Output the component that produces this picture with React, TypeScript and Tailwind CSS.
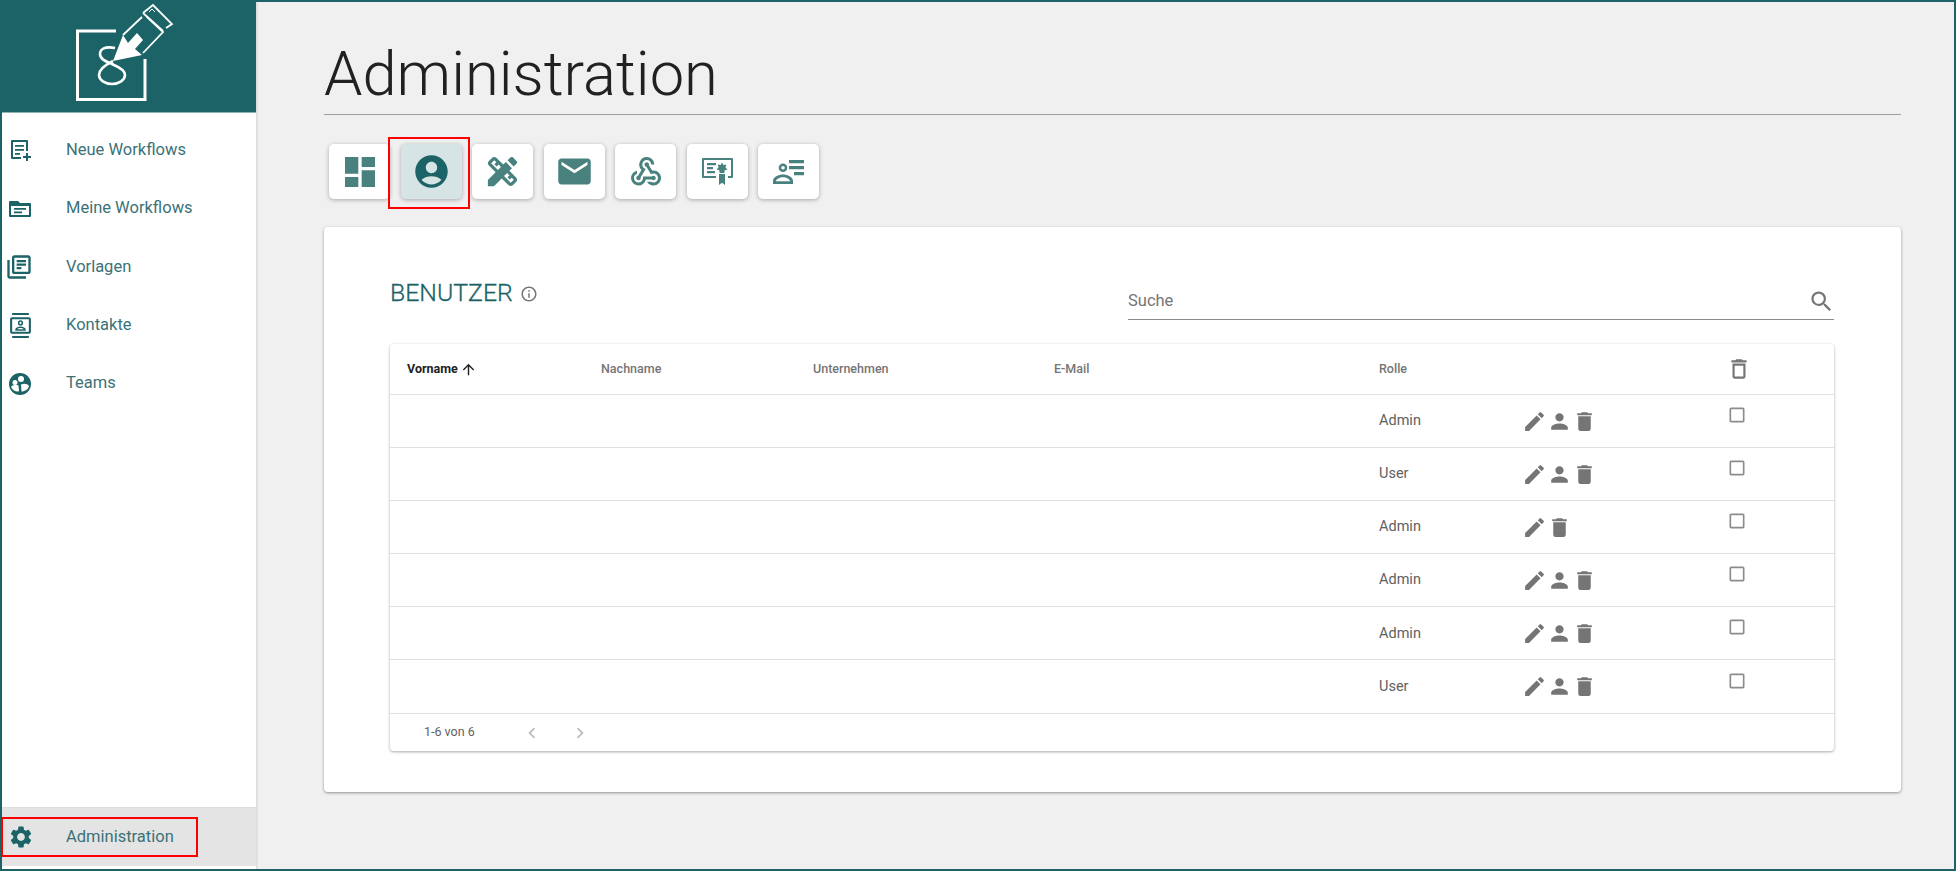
import {
  MdAccountCircle,
  MdArrowUpward,
  MdChevronLeft,
  MdChevronRight,
  MdDashboard,
  MdDelete,
  MdDesignServices,
  MdEdit,
  MdEmail,
  MdOutlineCheckBoxOutlineBlank,
  MdOutlineContacts,
  MdOutlineDelete,
  MdOutlineInfo,
  MdOutlineLibraryBooks,
  MdPerson,
  MdSearch,
  MdSettings,
  MdWebhook,
} from "react-icons/md";

const Logo = () => (
  <svg width="100" height="108" viewBox="76 2 100 108" fill="none" stroke="#fff">
    <path d="M116 31H77.500V99.500H145V59" strokeWidth="3" />
    <path d="M115 48C105 46 100 49 100 54C100 60 108 62 114 65C121 68 125 71 125 75C125 80 119 84 112 84C105 84 99 80 99 75C99 69 105 65 113 61" strokeWidth="2.600" />
    <path d="M113 61L123 35L128 43L137 33L143 40L135 49L142 55Z" fill="#fff" stroke="none" />
    <path d="M123 35L142 17M147 17L163 32L143 53" strokeWidth="1.800" />
    <path d="M143 13L153 5L172 24L166 28M143 13L163 31" strokeWidth="1.800" />
    <path d="M149 12L152 9L155 12" strokeWidth="1" />
  </svg>
);

const PostAddIcon = () => (
  <svg width="24" height="24" viewBox="0 0 24 24" fill="currentColor">
    <path d="M4 2h15a1 1 0 0 1 1 1v10h-2V4H5v15h8v2H4a1 1 0 0 1-1-1V3a1 1 0 0 1 1-1Z" />
    <path d="M7 7h9v1.800H7zM7 11h9v1.800H7zM7 15h5v1.800H7z" />
    <path d="M18 15h2v3h3v2h-3v3h-2v-3h-3v-2h3z" />
  </svg>
);

const FolderLines = () => (
  <svg width="24" height="24" viewBox="0 0 24 24" fill="currentColor">
    <path d="M2 4h8l2 2h10a1 1 0 0 1 1 1v12a1 1 0 0 1-1 1H2a1 1 0 0 1-1-1V5a1 1 0 0 1 1-1Zm1 5v9h18V9H3Z" />
    <path d="M6 11h12v1.700H6zM6 14.500h8v1.700H6z" />
  </svg>
);

const TeamsIcon = () => (
  <svg width="24" height="24" viewBox="0 0 24 24">
    <circle cx="12" cy="12" r="11" fill="currentColor" />
    <circle cx="13" cy="7" r="3" fill="#fff" />
    <circle cx="7" cy="10.500" r="2.500" fill="#fff" />
    <path d="M3 15c1-2 5-2.500 7.500-1.500L11 19c-1.500 1.500-6 0-8-4Z" fill="#fff" />
    <path d="M13 12.500c2.500-1.500 6.500-1 8 1.500-.5 3-4 5.500-7.500 5.500Z" fill="#fff" />
  </svg>
);

const CertificateIcon = () => (
  <svg width="31" height="27" viewBox="0 0 31 27" fill="currentColor">
    <path d="M1 0h29a1 1 0 0 1 1 1v18a1 1 0 0 1-1 1h-4v-2h3V2H2v16h12v2H1a1 1 0 0 1-1-1V1a1 1 0 0 1 1-1Z" />
    <path d="M5 5h9v2.200H5zM5 9h6v2.200H5zM5 13h8v2.200H5z" />
    <path d="M20 4.500l1.400 2.600 2.900-.5-.8 2.800 2 2.100-2.800.8-.3 2.700h-4.800l-.3-2.700-2.800-.8 2-2.100-.8-2.800 2.900.5Z" />
    <path d="M17 16h6v11l-3-2.200-3 2.200z" />
  </svg>
);

const PersonLines = () => (
  <svg width="31" height="24" viewBox="0 0 31 24" fill="currentColor">
    <path d="M10 3.500a4.300 4.300 0 1 1 0 8.600 4.300 4.300 0 0 1 0-8.600Zm0 2.500a1.800 1.800 0 1 0 0 3.600A1.800 1.800 0 0 0 10 6Z" />
    <path d="M0 24v-3c0-4 5.500-6.500 10-6.500S20 17 20 21v3Zm2.800-2.800h14.400c-.5-2-3.700-4-7.200-4s-6.700 2-7.200 4Z" />
    <path d="M16 0h15v3.200H16zM16 6h15v3.200H16zM21 12h10v3.200H21z" />
  </svg>
);

const navItems = [
  { label: "Neue Workflows", icon: <PostAddIcon /> },
  { label: "Meine Workflows", icon: <FolderLines /> },
  { label: "Vorlagen", icon: <MdOutlineLibraryBooks size={28} className="ml-[-3px]" /> },
  { label: "Kontakte", icon: <MdOutlineContacts size={25} /> },
  { label: "Teams", icon: <TeamsIcon /> },
];

const toolbar = [
  { id: 1, icon: <MdDashboard size={40} /> },
  { id: 2, icon: <MdAccountCircle size={39} />, active: true },
  { id: 3, icon: <MdDesignServices size={39} /> },
  { id: 4, icon: <MdEmail size={39} /> },
  { id: 5, icon: <MdWebhook size={36} /> },
  { id: 6, icon: <CertificateIcon /> },
  { id: 7, icon: <PersonLines /> },
];

const users = [
  { id: 1, role: "Admin", canImpersonate: true },
  { id: 2, role: "User", canImpersonate: true },
  { id: 3, role: "Admin", canImpersonate: false },
  { id: 4, role: "Admin", canImpersonate: true },
  { id: 5, role: "Admin", canImpersonate: true },
  { id: 6, role: "User", canImpersonate: true },
];

const gridCols = "grid grid-cols-[194px_212px_241px_325px_143px_207px_1fr] items-center pl-[17px] pr-4";

const App = () => {
  return (
    <div className="flex h-[871px] w-full border-2 border-[#1c6367] bg-[#f0f0f0] font-['Roboto',sans-serif]">
      <aside className="flex w-[256px] flex-col border-r-2 border-[#e0e0e0] bg-white">
        <div className="h-[111px] border-b border-[#8fb5b5] bg-[#1c6367] pl-[74px]">
          <Logo />
        </div>
        <nav className="flex flex-1 flex-col pt-[8px] text-[#3b7277]">
          {navItems.map((item) => (
            <div key={item.label} className="flex h-[58.400px] items-center">
              <div className="flex w-[64px] shrink-0 justify-start pl-[6px] text-[#1c6367]">{item.icon}</div>
              <span className="text-[16.500px]">{item.label}</span>
            </div>
          ))}
        </nav>
        <div className="relative mb-[3px] flex h-[59px] items-center border-t border-[#dddddd] bg-[#e4e4e4] text-[#3b7277]">
          <div className="flex w-[64px] shrink-0 pl-[6px] text-[#1c6367]">
            <MdSettings size={26} />
          </div>
          <span className="text-[16.500px]">Administration</span>
          <div className="absolute left-[-1px] top-[9px] h-[40px] w-[197px] border-2 border-[#ff0000]" />
        </div>
      </aside>

      <main className="min-w-0 flex-1 pl-[66px] pr-[53px]">
        <h1 className="mt-[35px] border-b border-[#9e9e9e] pb-[2px] text-[61.500px] font-light leading-[75px] text-[#212121]">
          Administration
        </h1>

        <div className="mt-[29px] flex gap-[10.500px] pl-[5px]">
          {toolbar.map((btn) => (
            <div
              key={btn.id}
              className={`relative flex h-[55px] w-[61px] items-center justify-center rounded-[5px] shadow-[0_1px_4px_rgba(0,0,0,0.3)] ${
                btn.active ? "bg-[#d6e4e5] text-[#1c6367]" : "bg-white text-[#49817f]"
              }`}
            >
              {btn.icon}
              {btn.active && (
                <div className="absolute left-[-13px] top-[-7px] h-[72px] w-[82px] border-2 border-[#ff0000]" />
              )}
            </div>
          ))}
        </div>

        <section className="mt-[28px] h-[565px] rounded-[4px] bg-white pl-[66px] pr-[67px] pt-[47px] shadow-[0_1px_3px_rgba(0,0,0,0.4)]">
          <div className="flex h-[70px] items-start justify-between">
            <div className="mt-[3px] flex items-center gap-[7px] text-[#1c6367]">
              <h2 className="text-[24.800px] font-light leading-[32px] [-webkit-text-stroke:0.3px_#1c6367]">BENUTZER</h2>
              <MdOutlineInfo size={18} className="mt-[2px] text-[#757575]" />
            </div>
            <div className="mt-[12px] flex h-[34px] w-[706px] items-center justify-between border-b border-[#8c8c8c] pb-[3px] text-[#757575]">
              <span className="mt-[1px] text-[16.500px] font-normal">Suche</span>
              <MdSearch size={27} className="mr-[-1px]" />
            </div>
          </div>

          <div className="rounded-[4px] bg-white shadow-[0_1px_3px_rgba(0,0,0,0.35)]">
            <div className={`${gridCols} h-[51px] border-b border-[#e0e0e0] text-[12.500px] font-medium text-[#757575]`}>
              <span className="flex items-center gap-[2px] font-bold text-[#212121]">
                Vorname <MdArrowUpward size={17} />
              </span>
              <span>Nachname</span>
              <span>Unternehmen</span>
              <span>E-Mail</span>
              <span>Rolle</span>
              <span />
              <MdOutlineDelete size={26} className="ml-[-3px]" />
            </div>
            {users.map((user) => (
              <div key={user.id} className={`${gridCols} h-[53.100px] border-b border-[#e0e0e0] text-[14.500px] text-[#616161]`}>
                <span />
                <span />
                <span />
                <span />
                <span>{user.role}</span>
                <div className="flex items-center text-[#757575]">
                  <MdEdit size={25} />
                  {user.canImpersonate && <MdPerson size={25} />}
                  <MdDelete size={25} />
                </div>
                <MdOutlineCheckBoxOutlineBlank size={20} className="mb-[12px] ml-[-2px] text-[#8c8c8c]" />
              </div>
            ))}
            <div className="flex h-[37.500px] items-center pl-[34px] text-[12.500px] text-[#616161]">
              <span className="w-[97px]">1-6 von 6</span>
              <MdChevronLeft size={22} className="mt-[1px] text-[#bdbdbd]" />
              <MdChevronRight size={22} className="ml-[26px] mt-[1px] text-[#bdbdbd]" />
            </div>
          </div>
        </section>
      </main>
    </div>
  );
};

export default App;
